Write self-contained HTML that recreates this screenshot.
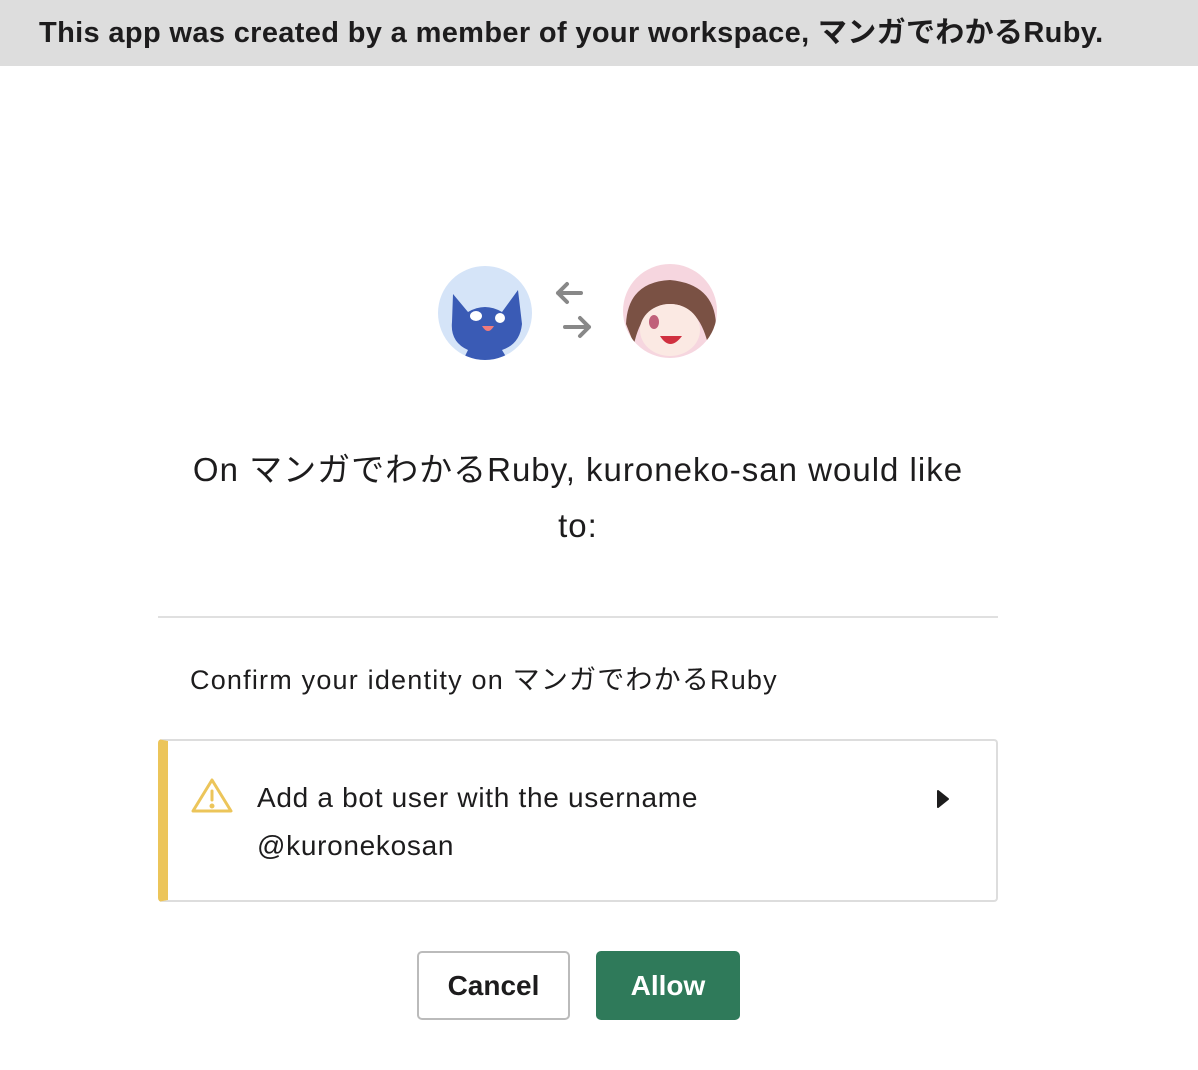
<!DOCTYPE html>
<html><head><meta charset="utf-8"><style>
body{margin:0;width:1198px;height:1070px;background:#fff;font-family:"Liberation Sans","Noto Sans CJK JP",sans-serif;color:#1d1c1d;position:relative;overflow:hidden}
.banner{position:absolute;left:0;top:0;width:1198px;height:66px;background:#ddd;font-weight:bold;font-size:29px;line-height:66px;padding-left:39px;box-sizing:border-box;letter-spacing:0.35px;white-space:nowrap}
.abs{position:absolute}
h1{position:absolute;left:178px;width:800px;top:442px;margin:0;font-weight:normal;font-size:33px;line-height:56px;text-align:center;letter-spacing:1px}
.hr{position:absolute;left:158px;width:840px;top:616px;height:2px;background:#e0e0e0}
.box{position:absolute;left:158px;top:739px;width:840px;height:163px;box-sizing:border-box;border:2px solid #ddd;border-left:10px solid #ecc55a;border-radius:4px}
.btn{position:absolute;top:951px;height:69px;box-sizing:border-box;border-radius:5px;font-weight:bold;font-size:28px;line-height:65px;text-align:center}
</style></head><body>
<div class="banner">This app was created by a member of your workspace, マンガでわかるRuby.</div>
<svg class="abs" style="left:438px;top:264px" width="282" height="98">
<defs><clipPath id="c1"><circle cx="47" cy="49" r="47"/></clipPath><clipPath id="c2"><circle cx="232" cy="47" r="47"/></clipPath></defs>
<circle cx="47" cy="49" r="47" fill="#d5e4f8"/>
<g clip-path="url(#c1)">
<path d="M15 30 L30 48 Q47 38 64 48 L80 26 L84 60 Q82 80 64 86 L70 96 L25 96 L30 86 Q12 78 14 58 Z" fill="#3a5bb5"/>
<ellipse cx="38" cy="52" rx="6" ry="5" fill="#fff"/><ellipse cx="62" cy="54" rx="5" ry="5" fill="#fff"/>
<path d="M44 62 Q50 72 56 62 Z" fill="#f27b7b"/></g>
<circle cx="232" cy="47" r="47" fill="#f6d6df"/>
<g clip-path="url(#c2)">
<path d="M188 60 Q190 18 232 16 Q276 20 278 60 L270 80 Q260 40 232 40 Q205 40 196 80 Z" fill="#7a5144"/>
<ellipse cx="232" cy="66" rx="30" ry="26" fill="#fbe9e3"/>
<ellipse cx="216" cy="58" rx="5" ry="7" fill="#c0607a"/>
<path d="M222 72 Q232 88 244 72 Z" fill="#d03040"/>
<path d="M200 92 Q232 104 264 92 L262 98 L202 98Z" fill="#d33"/></g>
</svg>
<svg class="abs" style="left:553px;top:280px" width="42" height="60" fill="none" stroke="#888" stroke-width="4" stroke-linecap="round" stroke-linejoin="round">
<path d="M28 13H5M14 4L5 13L14 22"/><path d="M12 47H36M27 38L36 47L27 56"/>
</svg>
<h1>On マンガでわかるRuby, kuroneko-san would like to:</h1>
<div class="hr"></div>
<div class="abs" style="left:190px;top:660px;font-size:27px;line-height:40px;letter-spacing:1.2px">Confirm your identity on マンガでわかるRuby</div>
<div class="box"></div>
<svg class="abs" style="left:191px;top:777px" width="42" height="38" fill="none" stroke="#ecc55a" stroke-width="3" stroke-linejoin="round" stroke-linecap="round">
<path d="M21 3L40 34H2Z"/><path d="M21 14V23"/><circle cx="21" cy="29" r="1" fill="#ecc55a"/>
</svg>
<div class="abs" style="left:257px;top:774px;font-size:28px;line-height:48px;letter-spacing:0.7px">Add a bot user with the username<br>@kuronekosan</div>
<svg class="abs" style="left:936px;top:789px" width="14" height="20"><path d="M2 2L12 10L2 18Z" fill="#1d1c1d" stroke="#1d1c1d" stroke-width="2" stroke-linejoin="round"/></svg>
<div class="btn" style="left:417px;width:153px;border:2px solid #bbb;color:#1d1c1d">Cancel</div>
<div class="btn" style="left:596px;width:144px;background:#2f7a5a;color:#fff;line-height:69px">Allow</div>
</body></html>
